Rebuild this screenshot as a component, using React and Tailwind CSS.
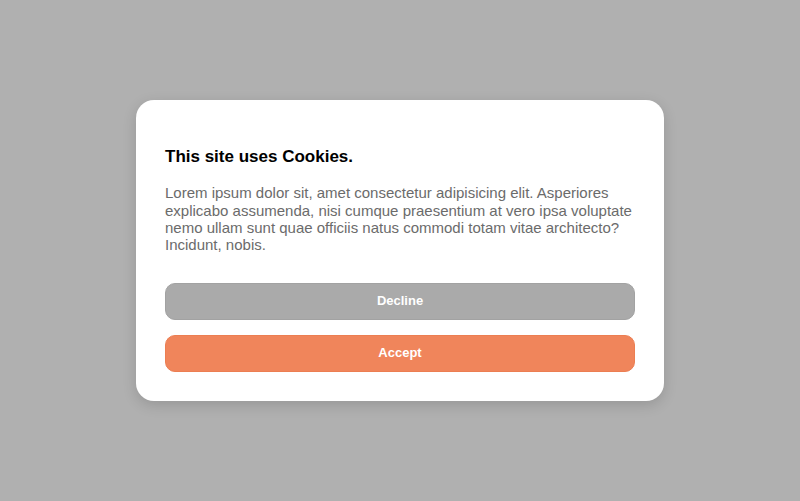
import React from "react";

export default function App() {
  return (
    <div className="h-screen w-screen bg-[#b0b0b0] flex items-center justify-center font-['Liberation_Sans',Arial,sans-serif]">
      <div className="w-[528px] bg-white rounded-[18px] shadow-[0_4px_14px_rgba(0,0,0,0.15)] px-[29px] pt-[46px] pb-[29px]">
        <h2 className="text-[17px] leading-[22px] font-bold text-black">This site uses Cookies.</h2>
        <p className="mt-[16px] text-[15px] leading-[17.3px] text-[#6b6b6b]">
          Lorem ipsum dolor sit, amet consectetur adipisicing elit. Asperiores explicabo assumenda, nisi cumque
          praesentium at vero ipsa voluptate nemo ullam sunt quae officiis natus commodi totam vitae architecto?
          Incidunt, nobis.
        </p>
        <div className="mt-[29px] flex flex-col gap-[15px]">
          <button className="h-[37px] w-full rounded-[10px] bg-[#aaaaaa] border border-[#a2a2a2] text-white text-[13px] font-bold">
            Decline
          </button>
          <button className="h-[37px] w-full rounded-[10px] bg-[#f0855b] border border-[#ec7e52] text-white text-[13px] font-bold">
            Accept
          </button>
        </div>
      </div>
    </div>
  );
}
